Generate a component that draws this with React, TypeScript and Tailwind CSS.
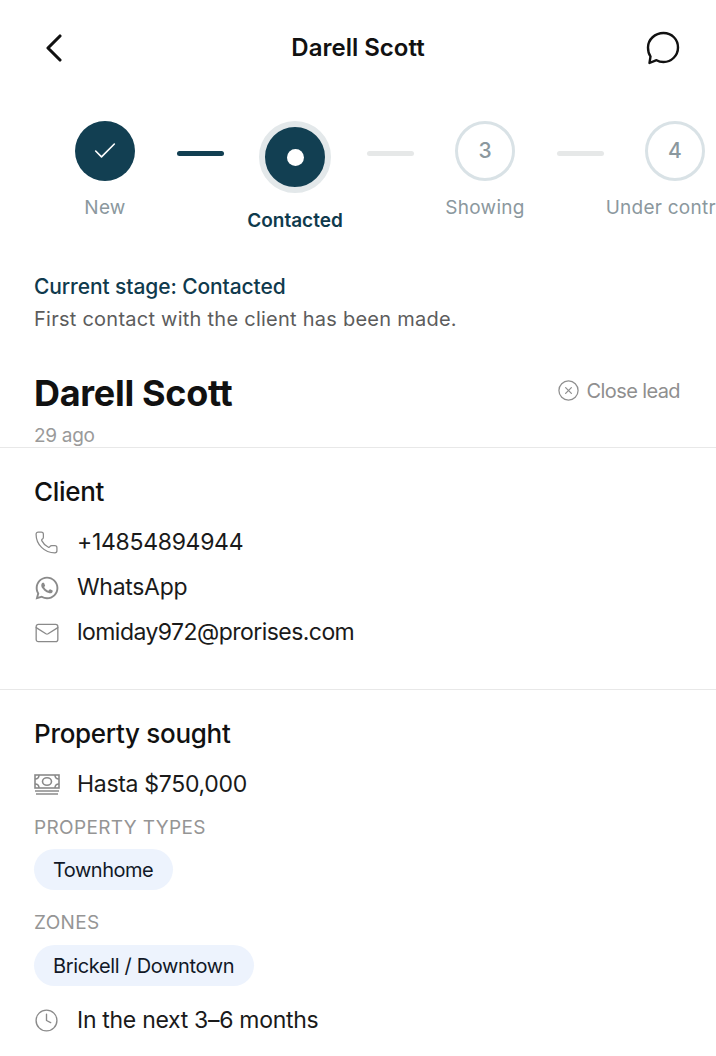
import { Check, CircleX, Phone, Mail, Clock } from "lucide-react";
import { FaWhatsapp } from "react-icons/fa";

const Connector = ({ done }: { done?: boolean }) => (
  <div className={`shrink-0 w-[47px] h-[5px] mt-[30px] rounded-full ${done ? "bg-[#123f52]" : "bg-[#e6e8e8]"}`} />
);

const Step = ({ n, label }: { n: string; label: string }) => (
  <div className="shrink-0 w-[143px] pr-px flex flex-col items-center">
    <div className="w-[60px] h-[60px] rounded-full border-[3px] border-[#d9e2e6] flex items-center justify-center text-[21px] font-medium text-[#8b989e]">
      {n}
    </div>
    <div className="mt-[14px] text-[19px] leading-[26px] tracking-[0.25px] text-[#8b989e] whitespace-nowrap">{label}</div>
  </div>
);

const Row = ({ icon, text, tight }: { icon: React.ReactNode; text: string; tight?: boolean }) => (
  <div className="flex items-center h-[45px]">
    <div className="w-[43px] shrink-0 text-[#8a8a8a]">{icon}</div>
    <span className={`text-[23px] text-[#1a1a1a] ${tight ? "tracking-[-0.55px]" : ""}`}>{text}</span>
  </div>
);

const Money = () => (
  <svg width="26" height="22" viewBox="0 0 26 22" fill="none" stroke="currentColor" strokeWidth="1.6">
    <rect x="1" y="1" width="24" height="13" />
    <ellipse cx="13" cy="7.5" rx="4.5" ry="3.8" />
    <path d="M1 5c2.5 0 4-1.5 4-4M25 5c-2.5 0-4-1.5-4-4M1 10c2.5 0 4 1.5 4 4M25 10c-2.5 0-4 1.5-4 4" />
    <path d="M1 17h24M2 20h22" />
  </svg>
);

export default function App() {
  return (
    <div className="w-[716px] h-[1056px] overflow-hidden bg-white font-['Inter',sans-serif] tracking-[-0.3px]">
      <header className="h-[95px] grid grid-cols-[1fr_auto_1fr] items-center px-[35px]">
        <svg className="ml-[10px]" width="18" height="28" viewBox="0 0 18 28" fill="none" stroke="#111" strokeWidth="3.1" strokeLinecap="round" strokeLinejoin="round">
          <path d="M15 2 L3 14 L15 26" />
        </svg>
        <h1 className="text-[24px] tracking-normal font-semibold text-[#111]">Darell Scott</h1>
        <svg className="justify-self-end" width="36" height="36" viewBox="0 0 36 36" fill="none" stroke="#111" strokeWidth="2.4" strokeLinejoin="round">
          <path d="M18.5 3C27 3 33 9.5 33 17.5S26.5 32 18.5 32c-2.6 0-5-.6-7-1.8L4.5 33l1-6.6C3.6 24 3 21 3 17.5 3 9.5 10 3 18.5 3z" />
        </svg>
      </header>

      <div className="flex items-start pl-[34px] mt-[26px] overflow-hidden tracking-normal">
        <div className="shrink-0 w-[143px] pr-px flex flex-col items-center">
          <div className="w-[60px] h-[60px] rounded-full bg-[#123f52] flex items-center justify-center">
            <Check size={28} strokeWidth={1.4} className="text-white" />
          </div>
          <div className="mt-[14px] text-[19px] leading-[26px] tracking-[0.25px] text-[#8b989e]">New</div>
        </div>
        <Connector done />
        <div className="shrink-0 w-[143px] pr-px flex flex-col items-center">
          <div className="w-[72px] h-[72px] rounded-full bg-[#123f52] border-[6px] border-[#e3e8ea] flex items-center justify-center">
            <div className="w-[17px] h-[17px] rounded-full bg-white" />
          </div>
          <div className="mt-[15px] text-[19px] leading-[26px] font-semibold text-[#0f3a4d]">Contacted</div>
        </div>
        <Connector />
        <Step n="3" label="Showing" />
        <Connector />
        <Step n="4" label="Under contract" />
      </div>

      <section className="px-[34px] mt-[37px]">
        <p className="text-[21px] leading-[32px] tracking-[-0.1px] font-medium text-[#0f3a4d]">Current stage: Contacted</p>
        <p className="text-[20px] leading-[32px] tracking-[0.25px] text-[#5c5c5c]">First contact with the client has been made.</p>
      </section>

      <section className="flex items-center justify-between pl-[34px] pr-[36px] mt-[35px]">
        <h2 className="text-[36px] leading-[46px] font-bold text-[#111]">Darell Scott</h2>
        <div className="flex items-center gap-[7px] text-[#8f8f8f] -mt-[5px]">
          <CircleX size={23} strokeWidth={1.3} />
          <span className="text-[20px] tracking-[-0.6px]">Close lead</span>
        </div>
      </section>
      <p className="px-[34px] text-[19px] leading-[22px] text-[#9a9a9a] mt-[9px]">29 ago</p>

      <section className="border-t border-[#e8e8e8] px-[34px] pt-[26px] pb-[34px]">
        <h3 className="text-[26px] leading-[36px] font-medium text-[#111] mb-[10px]">Client</h3>
        <Row icon={<Phone size={25} strokeWidth={1.2} />} text="+14854894944" />
        <Row icon={<FaWhatsapp size={26} />} text="WhatsApp" />
        <Row icon={<Mail size={26} strokeWidth={1.2} />} text="lomiday972@prorises.com" tight />
      </section>

      <section className="border-t border-[#e8e8e8] px-[34px] pt-[26px]">
        <h3 className="text-[26px] leading-[36px] font-medium text-[#111] mb-[10px]">Property sought</h3>
        <Row icon={<Money />} text="Hasta $750,000" />
        <p className="text-[19px] leading-[26px] tracking-[0.35px] text-[#959595] mt-[8px]">PROPERTY TYPES</p>
        <span className="inline-flex items-center h-[41px] pl-[19px] pr-[20px] mt-[8px] rounded-full bg-[#edf3fd] text-[20px] tracking-[-0.5px] text-[#111827]">Townhome</span>
        <p className="text-[19px] leading-[26px] tracking-[0.35px] text-[#959595] mt-[20px]">ZONES</p>
        <span className="inline-flex items-center h-[41px] pl-[19px] pr-[20px] mt-[9px] rounded-full bg-[#edf3fd] text-[20px] tracking-[-0.35px] text-[#111827]">Brickell / Downtown</span>
        <div className="mt-[12px]">
          <Row icon={<Clock size={25} strokeWidth={1.3} />} text="In the next 3–6 months" />
        </div>
      </section>
    </div>
  );
}
